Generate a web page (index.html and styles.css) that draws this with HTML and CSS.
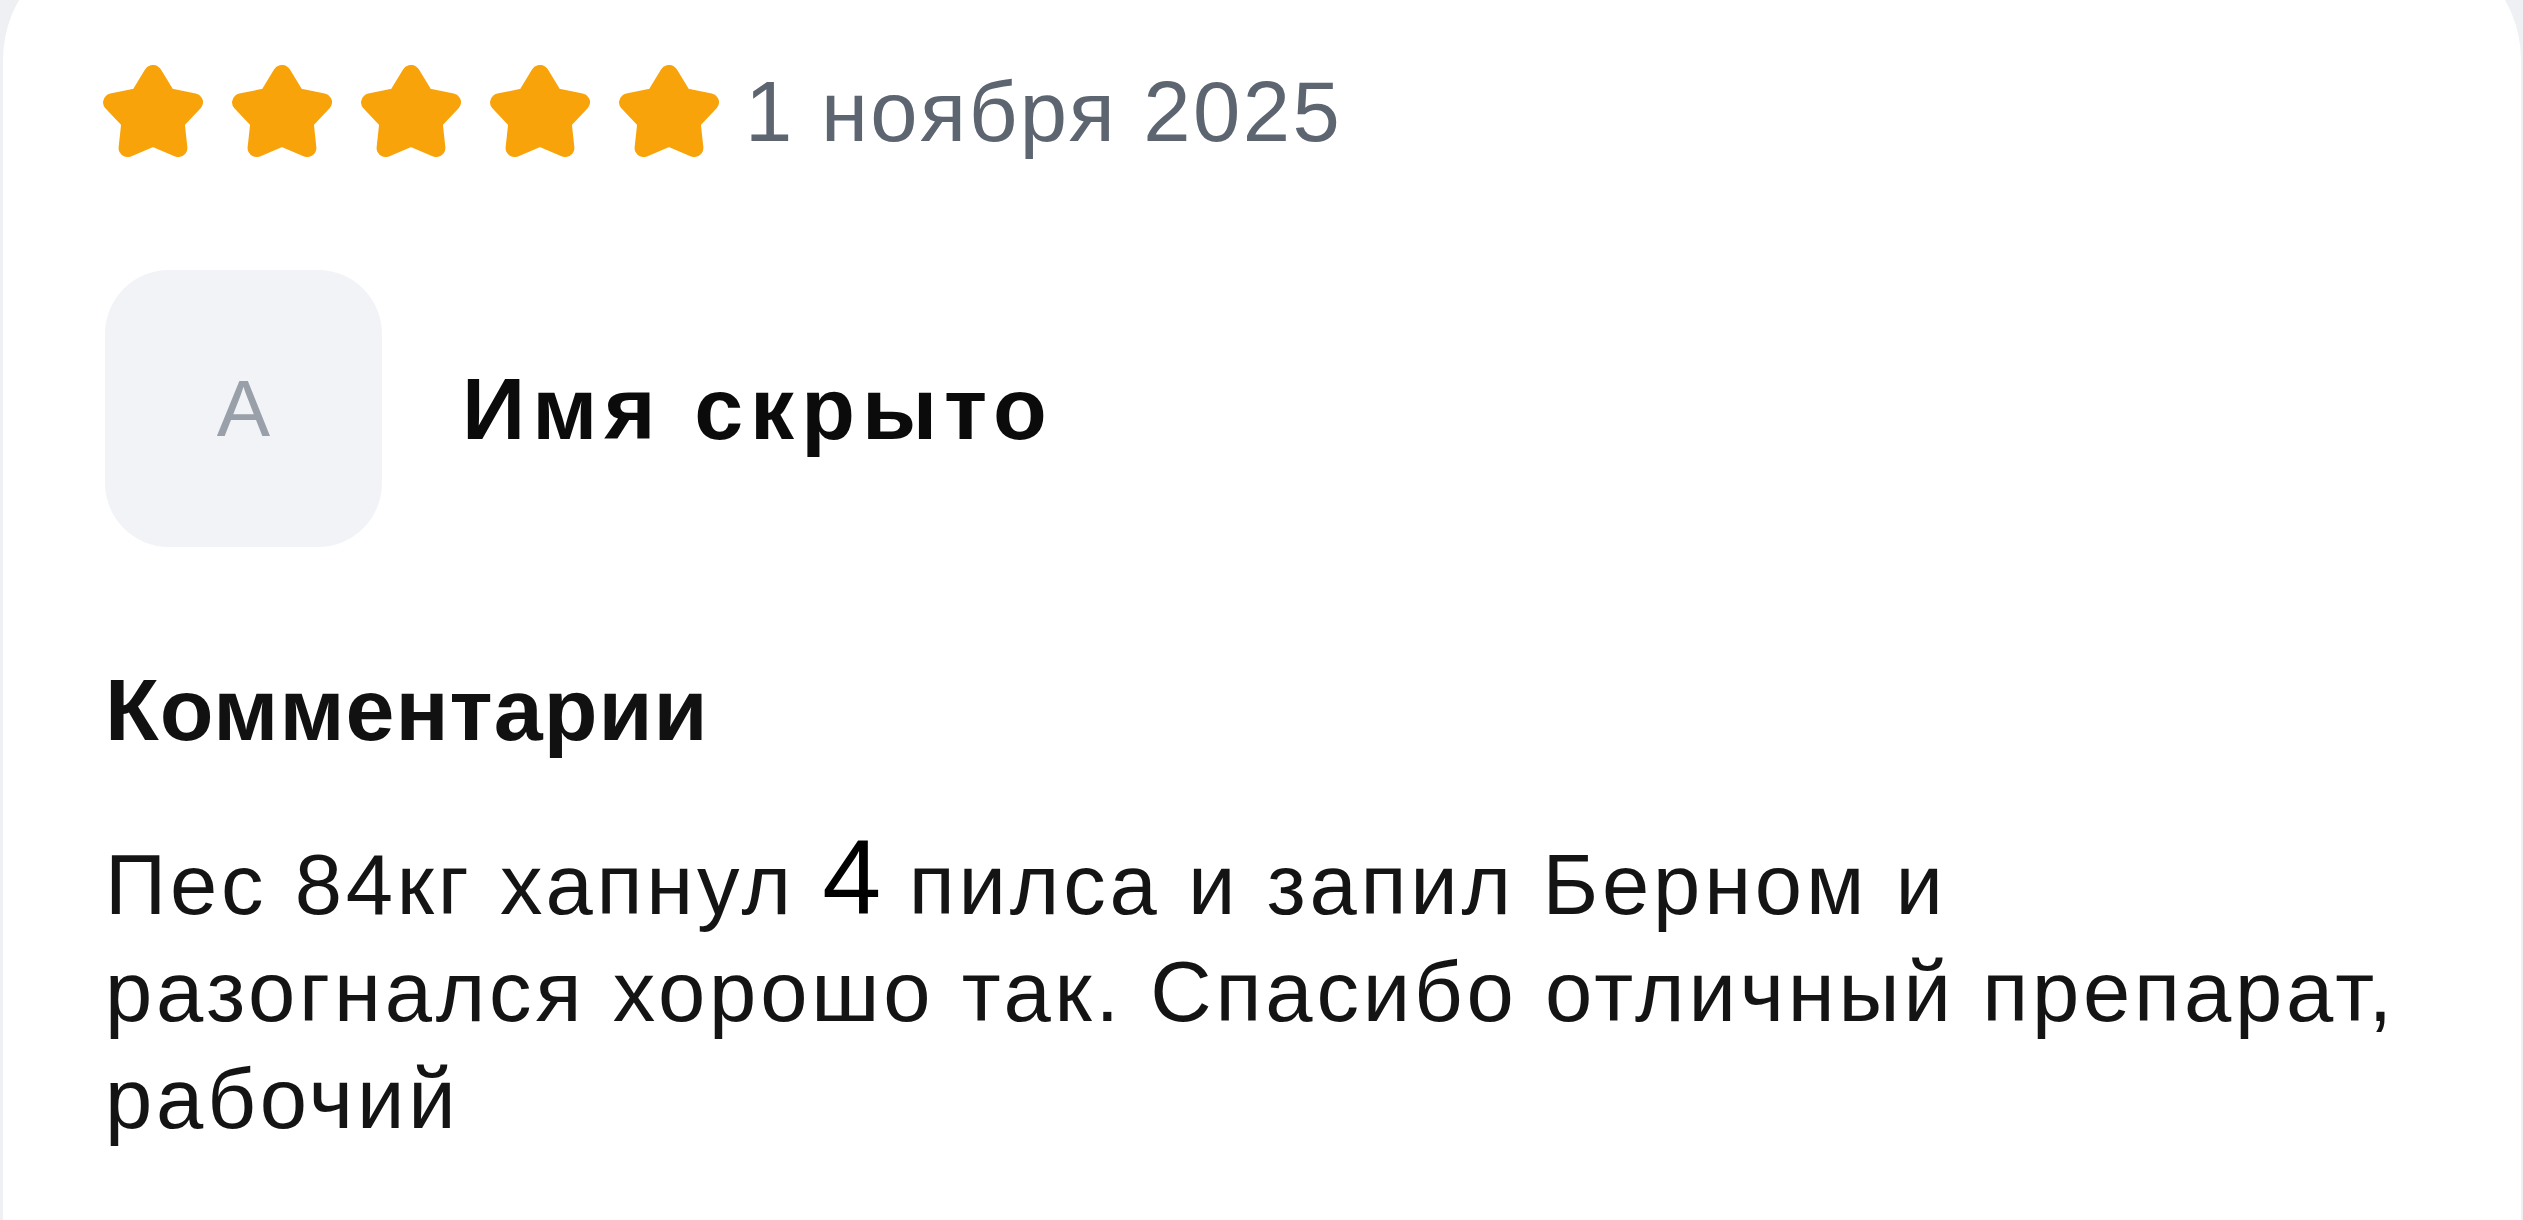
FILE: index.html
```html
<!DOCTYPE html>
<html>
<head>
    <title>Отзыв</title>
    <link rel="stylesheet" href="styles.css">
</head>
<body>
    <div class="card">
        <div class="rating">
            <div class="stars">
                <svg class="star" viewBox="1.155 1.3 21.69 20.82" preserveAspectRatio="none"><polygon points="12,3.3 14.998,8.474 20.845,9.726 16.85,14.176 17.466,20.124 12,17.7 6.534,20.124 7.15,14.176 3.155,9.726 9.002,8.474"/></svg>
                <svg class="star" viewBox="1.155 1.3 21.69 20.82" preserveAspectRatio="none"><polygon points="12,3.3 14.998,8.474 20.845,9.726 16.85,14.176 17.466,20.124 12,17.7 6.534,20.124 7.15,14.176 3.155,9.726 9.002,8.474"/></svg>
                <svg class="star" viewBox="1.155 1.3 21.69 20.82" preserveAspectRatio="none"><polygon points="12,3.3 14.998,8.474 20.845,9.726 16.85,14.176 17.466,20.124 12,17.7 6.534,20.124 7.15,14.176 3.155,9.726 9.002,8.474"/></svg>
                <svg class="star" viewBox="1.155 1.3 21.69 20.82" preserveAspectRatio="none"><polygon points="12,3.3 14.998,8.474 20.845,9.726 16.85,14.176 17.466,20.124 12,17.7 6.534,20.124 7.15,14.176 3.155,9.726 9.002,8.474"/></svg>
                <svg class="star" viewBox="1.155 1.3 21.69 20.82" preserveAspectRatio="none"><polygon points="12,3.3 14.998,8.474 20.845,9.726 16.85,14.176 17.466,20.124 12,17.7 6.534,20.124 7.15,14.176 3.155,9.726 9.002,8.474"/></svg>
            </div>
            <span class="date">1 ноября 2025</span>
        </div>

        <div class="author">
            <div class="avatar">А</div>
            <span class="name">Имя скрыто</span>
        </div>

        <h2 class="section-title">Комментарии</h2>
        <p class="comment">Пес 84кг хапнул <span class="num">4</span> пилса и запил Берном и<br>разогнался хорошо так. Спасибо отличный препарат,<br>рабочий</p>
    </div>
</body>
</html>
```

FILE: styles.css
```css
body {
    margin: 0;
    background: #eff0f3;
    font-family: "Liberation Sans", Arial, sans-serif;
    overflow: hidden;
}
.card {
    box-sizing: border-box;
    margin: -60px 2px 0 3px;
    padding: 125px 40px 0 102px;
    height: 1280px;
    background: #fff;
    border-radius: 120px 120px 0 0;
}
.rating {
    display: flex;
    align-items: center;
}
.stars {
    display: flex;
    gap: 29px;
    margin-left: -2px;
}
.star {
    width: 100px;
    height: 92px;
    display: block;
}
.star polygon {
    fill: #f9a30b;
    stroke: #f9a30b;
    stroke-width: 4;
    stroke-linejoin: round;
}
.date {
    margin-left: 26px;
    font-size: 85px;
    line-height: 1;
    letter-spacing: 2.5px;
    color: #5d6571;
}
.author {
    display: flex;
    align-items: center;
    margin-top: 113px;
}
.avatar {
    width: 277px;
    height: 277px;
    border-radius: 64px;
    background: #f2f3f7;
    display: flex;
    align-items: center;
    justify-content: center;
    font-size: 80px;
    color: #99a0aa;
}
.name {
    margin-left: 80px;
    font-size: 88px;
    font-weight: bold;
    letter-spacing: 7px;
    color: #0b0b0b;
}
.section-title {
    margin: 113px 0 0;
    font-size: 88px;
    line-height: 100px;
    font-weight: bold;
    letter-spacing: 1px;
    color: #111;
}
.comment {
    margin: 64px 0 0;
    font-size: 85px;
    line-height: 107px;
    letter-spacing: 3.8px;
    color: #141414;
    white-space: nowrap;
}
.num {
    font-size: 106px;
    line-height: 1;
    letter-spacing: 0;
    color: #000;
}
```
